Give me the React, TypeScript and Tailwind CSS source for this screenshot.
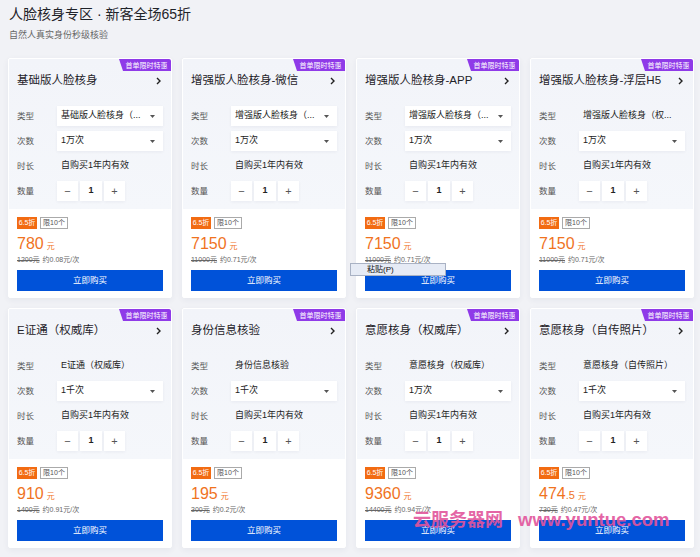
import React from 'react';

type Card = {
  title: string;
  type: string;
  typeSelect: boolean;
  count: string;
  price: string;
  dec?: string;
  orig: string;
  per: string;
};

const cards: Card[] = [
  { title: '基础版人脸核身', type: '基础版人脸核身（...', typeSelect: true, count: '1万次', price: '780', orig: '1200元', per: '约0.08元/次' },
  { title: '增强版人脸核身-微信', type: '增强版人脸核身（...', typeSelect: true, count: '1万次', price: '7150', orig: '11000元', per: '约0.71元/次' },
  { title: '增强版人脸核身-APP', type: '增强版人脸核身（...', typeSelect: true, count: '1万次', price: '7150', orig: '11000元', per: '约0.71元/次' },
  { title: '增强版人脸核身-浮层H5', type: '增强版人脸核身（权...', typeSelect: false, count: '1万次', price: '7150', orig: '11000元', per: '约0.71元/次' },
  { title: 'E证通（权威库）', type: 'E证通（权威库）', typeSelect: false, count: '1千次', price: '910', orig: '1400元', per: '约0.91元/次' },
  { title: '身份信息核验', type: '身份信息核验', typeSelect: false, count: '1千次', price: '195', orig: '300元', per: '约0.2元/次' },
  { title: '意愿核身（权威库）', type: '意愿核身（权威库）', typeSelect: false, count: '1万次', price: '9360', orig: '14400元', per: '约0.94元/次' },
  { title: '意愿核身（自传照片）', type: '意愿核身（自传照片）', typeSelect: false, count: '1千次', price: '474', dec: '.5', orig: '730元', per: '约0.47元/次' },
];

const font = { fontFamily: '"Liberation Sans", "Noto Sans CJK SC", sans-serif' };

function Caret() {
  return (
    <svg width="5" height="3" viewBox="0 0 5 3" className="shrink-0">
      <path d="M0 0 L5 0 L2.5 3 Z" fill="#555" />
    </svg>
  );
}

function Row({ label, children }: { label: string; children: React.ReactNode }) {
  return (
    <div className="flex h-[20px] items-center">
      <div className="w-[40px] shrink-0 text-[8.5px] text-[#555]">{label}</div>
      <div className="flex min-w-0 flex-1 items-center">{children}</div>
    </div>
  );
}

function Select({ text }: { text: string }) {
  return (
    <div className="flex h-[20px] flex-1 items-center justify-between bg-white pl-[4px] pr-[8px] shadow-[0_1px_3px_rgba(30,40,80,0.06)]">
      <span className="truncate text-[9px] text-[#222]">{text}</span>
      <Caret />
    </div>
  );
}

function CardView({ c }: { c: Card }) {
  return (
    <div className="relative flex h-[240px] flex-col overflow-hidden rounded-[2px] border border-white bg-white shadow-[0_2px_6px_rgba(40,50,90,0.06)]">
      <div
        className="absolute right-0 top-0 flex h-[12px] w-[52px] items-center justify-center rounded-tr-[2px] bg-[#8f3ae8] pl-[3px] text-[7px] leading-none text-white"
        style={{ clipPath: 'polygon(0 0, 100% 0, 100% 100%, 4px 100%)' }}
      >
        首单限时特惠
      </div>
      <div className="flex flex-col bg-gradient-to-b from-[#f2f4f9] to-[#f5f7fb] px-[8px] pb-[8px]">
        <div className="flex h-[44px] items-center justify-between">
          <span className="text-[11.5px] text-[#1f2329]">{c.title}</span>
          <svg width="5" height="8" viewBox="0 0 5 8" className="mr-[2px]">
            <path d="M1 1 L4 4 L1 7" stroke="#222" strokeWidth="1.4" fill="none" />
          </svg>
        </div>
        <div className="mt-[3px] flex flex-col gap-[5px]">
          <Row label="类型">
            {c.typeSelect ? (
              <Select text={c.type} />
            ) : (
              <span className="truncate pl-[4px] text-[9px] text-[#222]">{c.type}</span>
            )}
          </Row>
          <Row label="次数">
            <Select text={c.count} />
          </Row>
          <Row label="时长">
            <span className="pl-[4px] text-[9px] text-[#222]">自购买1年内有效</span>
          </Row>
          <Row label="数量">
            <div className="flex gap-[2px]">
              <div className="flex h-[20px] w-[21px] items-center justify-center bg-white text-[11px] text-[#555] shadow-[0_1px_3px_rgba(30,40,80,0.06)]">−</div>
              <div className="flex h-[20px] w-[22px] items-center justify-center bg-white text-[9px] font-bold text-[#222] shadow-[0_1px_3px_rgba(30,40,80,0.06)]">1</div>
              <div className="flex h-[20px] w-[21px] items-center justify-center bg-white text-[11px] text-[#555] shadow-[0_1px_3px_rgba(30,40,80,0.06)]">+</div>
            </div>
          </Row>
        </div>
      </div>
      <div className="flex flex-col px-[8px] pt-[8px]">
        <div className="flex h-[12px] gap-[3px]">
          <div className="flex w-[20px] items-center justify-center bg-[#f26b12] text-[7px] text-white">6.5折</div>
          <div className="flex w-[28px] items-center justify-center border border-[#aaa] text-[7px] text-[#555]">限10个</div>
        </div>
        <div className="mt-[6px] flex h-[18px] items-baseline text-[#f0731e]">
          <span className="text-[16px] leading-[18px]">{c.price}</span>
          {c.dec && <span className="text-[11px]">{c.dec}</span>}
          <span className="ml-[3px] text-[8px]">元</span>
        </div>
        <div className="mt-[2px] flex h-[10px] items-center gap-[3px] text-[7px] text-[#666]">
          <span className="line-through">{c.orig}</span>
          <span>{c.per}</span>
        </div>
        <div className="mt-[5px] flex h-[21px] items-center justify-center bg-[#0052d9] text-[8.5px] text-white">立即购买</div>
      </div>
    </div>
  );
}

export default function App() {
  return (
    <div className="relative h-[557px] w-[700px] overflow-hidden bg-[#f1f2f6]" style={font}>
      <div className="px-[9px] pt-[6px]">
        <div className="text-[14px] leading-[16px] text-[#1f2329]">人脸核身专区 · 新客全场65折</div>
        <div className="mt-[7px] text-[9px] leading-[12px] text-[#666]">自然人真实身份秒级核验</div>
      </div>
      <div className="mt-[17px] grid grid-cols-4 gap-x-[10px] gap-y-[10px] pl-[8px] pr-[6px]">
        {cards.map((c, i) => (
          <CardView key={i} c={c} />
        ))}
      </div>
      <div className="absolute left-[350px] top-[263px] flex h-[13px] w-[96px] items-center border border-[#a9b2c4] bg-[#e6ebf5] pl-[16px] text-[8px] text-[#111]">
        粘贴(P)
      </div>
      <div className="pointer-events-none absolute left-[413px] top-[508px] flex h-[24px] items-center whitespace-nowrap font-bold text-[#e2559c] opacity-90">
        <span className="text-[18px] leading-[24px]">云服务器网</span>
        <span className="ml-[15px] text-[18.5px] leading-[24px]">www.yuntue.com</span>
      </div>
    </div>
  );
}
